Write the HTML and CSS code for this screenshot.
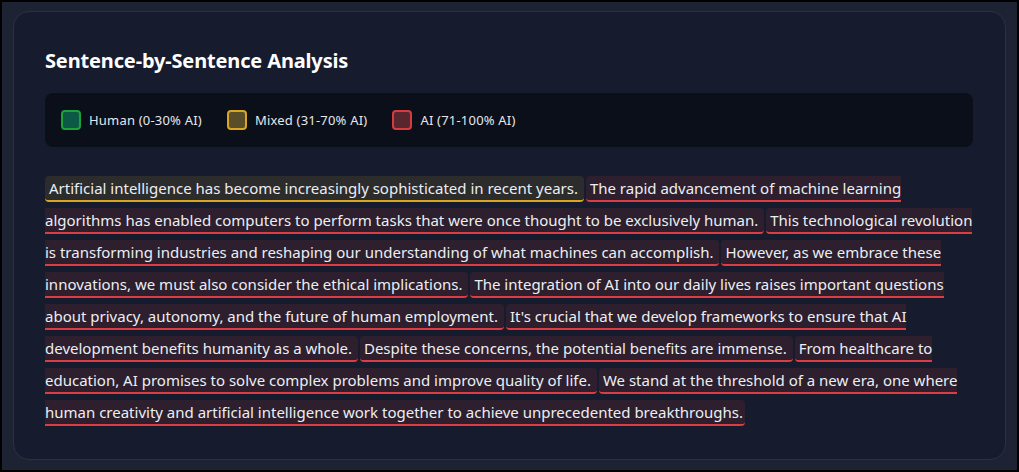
FILE: index.html
```html
<!DOCTYPE html>
<html>
<head>
<meta charset="utf-8">
<link rel="stylesheet" href="styles.css">
</head>
<body>
<div class="frame">
  <section class="card">
    <h2 class="title">Sentence-by-Sentence Analysis</h2>
    <div class="legend">
      <div class="legend-item"><span class="swatch swatch-human"></span>Human (0-30% AI)</div>
      <div class="legend-item"><span class="swatch swatch-mixed"></span>Mixed (31-70% AI)</div>
      <div class="legend-item"><span class="swatch swatch-ai"></span>AI (71-100% AI)</div>
    </div>
    <p class="analysis"><span class="sentence mixed">Artificial intelligence has become increasingly sophisticated in recent years. </span><span class="sentence ai">The rapid advancement of machine learning algorithms has enabled computers to perform tasks that were once thought to be exclusively human. </span><span class="sentence ai">This technological revolution is transforming industries and reshaping our understanding of what machines can accomplish. </span><span class="sentence ai">However, as we embrace these innovations, we must also consider the ethical implications. </span><span class="sentence ai">The integration of AI into our daily lives raises important questions about privacy, autonomy, and the future of human employment. </span><span class="sentence ai">It's crucial that we develop frameworks to ensure that AI development benefits humanity as a whole. </span><span class="sentence ai">Despite these concerns, the potential benefits are immense. </span><span class="sentence ai">From healthcare to education, AI promises to solve complex problems and improve quality of life. </span><span class="sentence ai">We stand at the threshold of a new era, one where human creativity and artificial intelligence work together to achieve unprecedented breakthroughs.</span></p>
  </section>
</div>
</body>
</html>
```
FILE: styles.css
```css
* { box-sizing: border-box; }
html, body { margin: 0; padding: 0; background: #000; }
body { font-family: "Noto Sans", sans-serif; }

.frame {
  height: 472px;
  border: 2px solid #000;
  background: #1d2332;
  padding: 9px 11px 10px 11px;
  display: flex;
}

.card {
  flex: 1;
  background: #161b2d;
  border: 1px solid #2a3242;
  border-radius: 16px;
  padding: 35px 32px 20px 31px;
}

.title {
  margin: 0 0 18px;
  font-size: 20px;
  line-height: 28px;
  font-weight: 700;
  color: #ffffff;
  letter-spacing: -0.15px;
}

.legend {
  background: #0b0f1a;
  border-radius: 8px;
  padding: 17px 16px;
  display: flex;
  align-items: center;
  gap: 25px;
}

.legend-item {
  display: flex;
  align-items: center;
  gap: 8px;
  font-size: 13px;
  letter-spacing: 0.2px;
  line-height: 20px;
  color: #e5e7eb;
}

.swatch {
  width: 20px;
  height: 20px;
  border-radius: 4px;
  border: 2px solid;
}
.swatch-human { background: #0c5a46; border-color: #19a33c; }
.swatch-mixed { background: #5a4e28; border-color: #daa520; }
.swatch-ai    { background: #57262f; border-color: #d63b3d; }

.analysis {
  margin: 25px -6px 0 0;
  font-size: 15px;
  line-height: 32px;
  color: #eceef3;
}

.sentence {
  padding: 2px 2px 2px 4px;
  margin-right: 2px;
  border-radius: 4px;
  border-bottom: 2px solid;
}
.sentence.mixed { background: #2b2c2b; border-color: #d9a520; }
.sentence.ai    { background: #2d1f2d; border-color: #dc3c42; }
```
